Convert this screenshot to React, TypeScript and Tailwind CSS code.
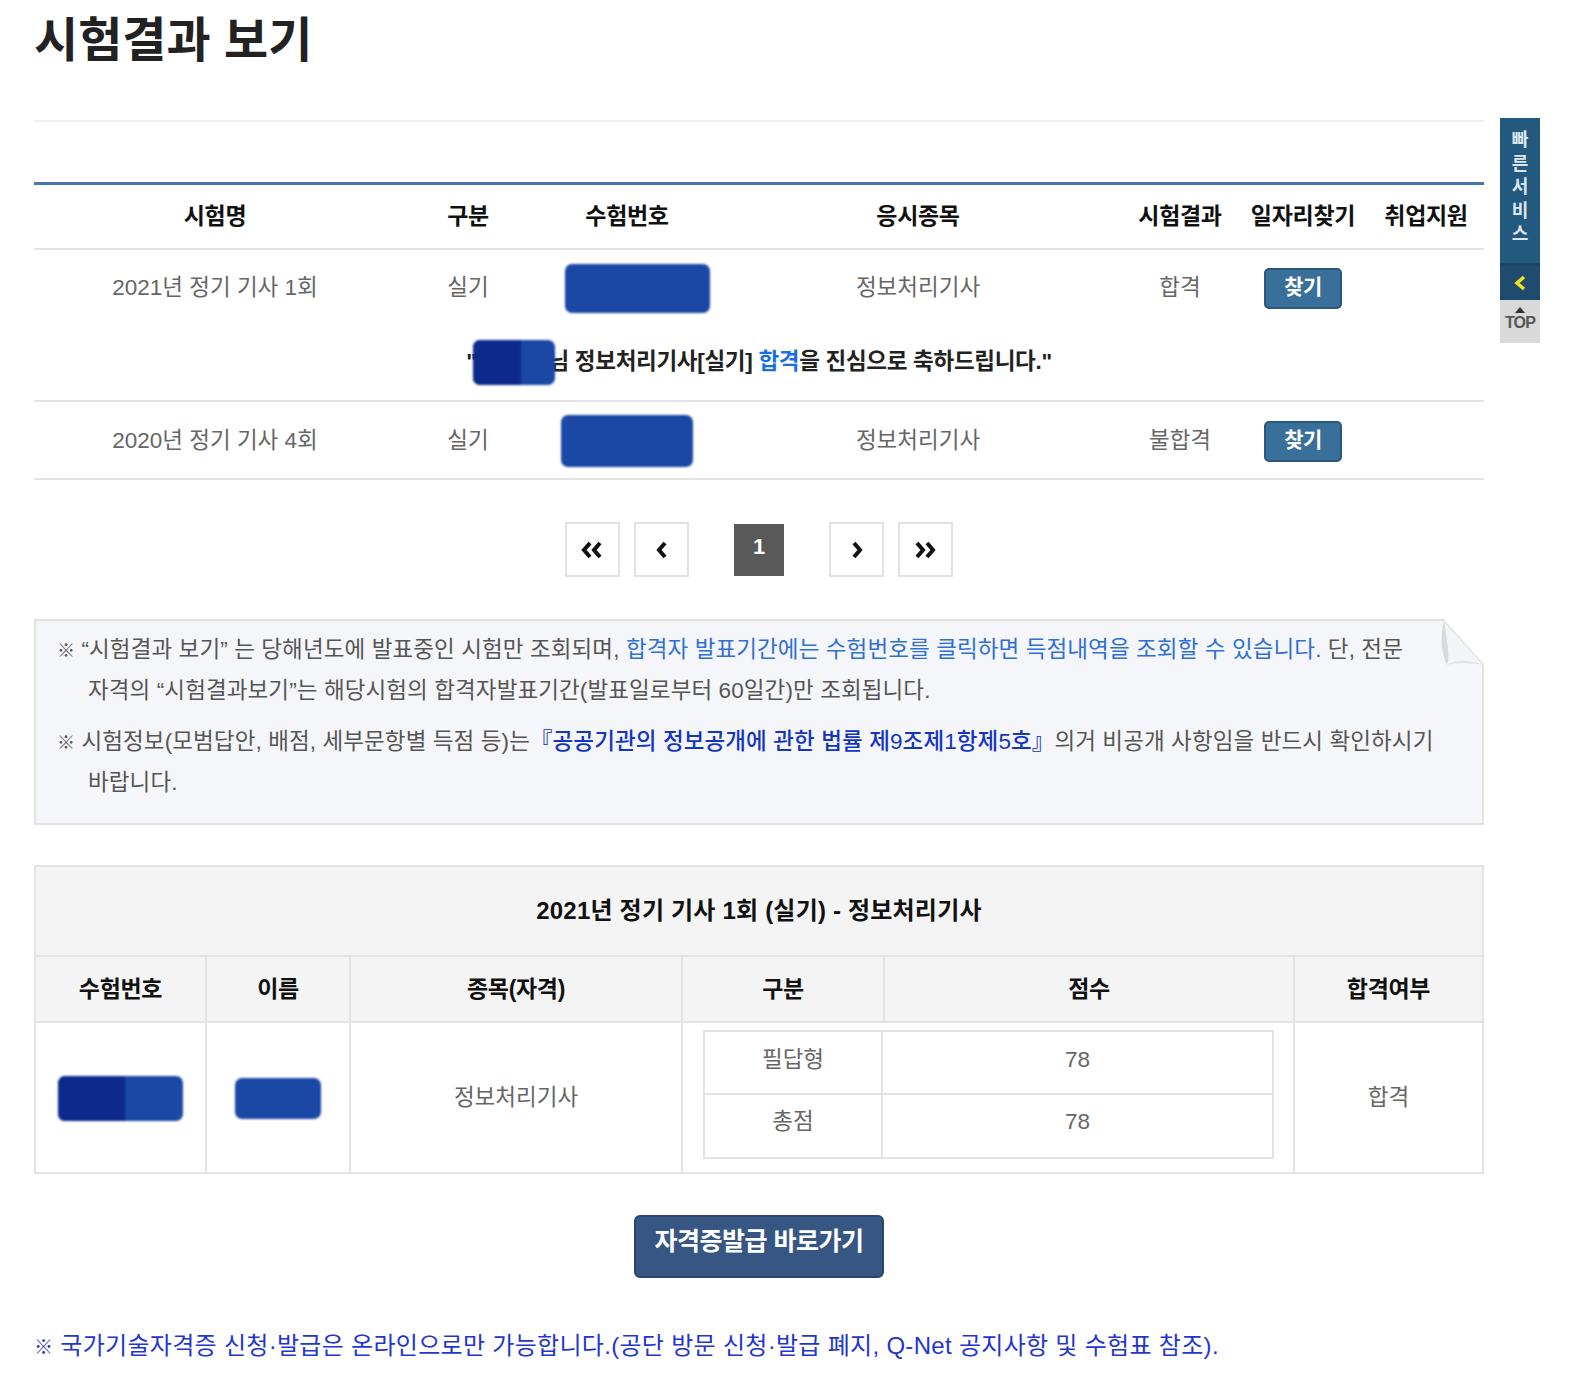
import React from "react";

const COLS = "grid-cols-[362px_144px_174px_408px_116px_130px_116px]";

function Blob({ w, h, dark, className = "" }: { w: number; h: number; dark?: number; className?: string }) {
  return (
    <span
      className={"relative inline-block rounded-[7px] bg-[#1b47a5] blur-[1.2px] overflow-hidden align-middle " + className}
      style={{ width: w, height: h }}
    >
      {dark ? <span className="absolute left-0 top-0 h-full bg-[#0b2a8c]" style={{ width: dark }} /> : null}
    </span>
  );
}

function FindButton() {
  return (
    <span className="inline-flex h-[41px] w-[78px] items-center justify-center rounded-[5px] border-2 border-[#2a587c] bg-[#39709a] pb-[3px] text-[21px] font-bold tracking-[-0.5px] text-white">
      찾기
    </span>
  );
}

function Chevrons({ dir, double }: { dir: "l" | "r"; double?: boolean }) {
  const one = dir === "l" ? "M9 2 L3 9 L9 16" : "M3 2 L9 9 L3 16";
  return (
    <svg width={double ? 24 : 12} height="18" viewBox={double ? "0 0 24 18" : "0 0 12 18"} fill="none">
      <path d={one} stroke="#111" strokeWidth="4" strokeLinejoin="miter" />
      {double && <path d={one} transform="translate(10 0)" stroke="#111" strokeWidth="4" strokeLinejoin="miter" />}
    </svg>
  );
}

function PageBox({ children }: { children: React.ReactNode }) {
  return (
    <div className="flex h-[55px] w-[55px] items-center justify-center border-2 border-[#e2e2e2] bg-white">{children}</div>
  );
}

export default function App() {
  return (
    <div className="relative min-h-[1388px] bg-white font-['Liberation_Sans','Noto_Sans_CJK_KR',sans-serif] text-[#222]">
      <div className="ml-[34px] w-[1450px]">
        {/* 제목 */}
        <h1 className="pt-[14px] text-[48px] font-bold leading-[54px] text-[#222]">시험결과 보기</h1>
        <div className="mt-[52px] h-[2px] bg-[#efefef]" />

        {/* 시험결과 목록 */}
        <div className="mt-[60px] border-t-[3px] border-[#4677b0]">
          <div className={"grid h-[65px] items-center border-b-2 border-[#e3e3e3] text-center text-[23px] font-bold tracking-[-0.3px] text-[#111] " + COLS}>
            <div>시험명</div>
            <div>구분</div>
            <div>수험번호</div>
            <div>응시종목</div>
            <div>시험결과</div>
            <div>일자리찾기</div>
            <div>취업지원</div>
          </div>
          <div className={"grid h-[74px] items-center pt-[2px] text-center text-[22.5px] text-[#666] " + COLS}>
            <div>2021년 정기 기사 1회</div>
            <div>실기</div>
            <div className="pl-[20px]">
              <Blob w={145} h={49} />
            </div>
            <div>정보처리기사</div>
            <div>합격</div>
            <div>
              <FindButton />
            </div>
            <div />
          </div>
          <div className="flex h-[78px] items-center justify-center border-b-2 border-[#e3e3e3] text-[22.5px] font-bold tracking-[-0.3px] text-[#222]">
            <span>"</span>
            <span className="relative inline-block h-[20px] w-[72px]">
              <span className="absolute left-[-4px] top-[-12px]">
                <Blob w={82} h={45} dark={48} />
              </span>
            </span>
            <span>
              님 정보처리기사[실기] <span className="text-[#1a6fe0]">합격</span>을 진심으로 축하드립니다."
            </span>
          </div>
          <div className={"grid h-[78px] items-center border-b-2 border-[#e3e3e3] pt-[2px] text-center text-[22.5px] text-[#666] " + COLS}>
            <div>2020년 정기 기사 4회</div>
            <div>실기</div>
            <div>
              <Blob w={132} h={52} />
            </div>
            <div>정보처리기사</div>
            <div>불합격</div>
            <div>
              <FindButton />
            </div>
            <div />
          </div>
        </div>

        {/* 페이지 */}
        <div className="mt-[42px] flex items-center justify-center">
          <PageBox>
            <Chevrons dir="l" double />
          </PageBox>
          <div className="ml-[14px]">
            <PageBox>
              <Chevrons dir="l" />
            </PageBox>
          </div>
          <div className="ml-[45px] flex h-[52px] w-[50px] items-start justify-center bg-[#595959] pt-[6px] text-[22px] font-bold text-white">
            1
          </div>
          <div className="ml-[45px]">
            <PageBox>
              <Chevrons dir="r" />
            </PageBox>
          </div>
          <div className="ml-[14px]">
            <PageBox>
              <Chevrons dir="r" double />
            </PageBox>
          </div>
        </div>

        {/* 안내 */}
        <div className="relative mt-[42px] border-2 border-[#e2e2e2] bg-[#f5f6fa] pb-[20px] pl-[21px] pr-[20px] pt-[9px] text-[22.5px] leading-[40px] tracking-[0.1px] text-[#555]">
          <p className="-indent-[31px] pl-[31px] whitespace-nowrap">
            <span className="text-[18px] font-bold">※</span> “시험결과 보기” 는 당해년도에 발표중인 시험만 조회되며,{" "}
            <span className="text-[#2f6fd6]">합격자 발표기간에는 수험번호를 클릭하면 득점내역을 조회할 수 있습니다.</span> 단, 전문
            <br />
            자격의 “시험결과보기”는 해당시험의 합격자발표기간(발표일로부터 60일간)만 조회됩니다.
          </p>
          <p className="mt-[11px] -indent-[31px] pl-[31px] whitespace-nowrap">
            <span className="text-[18px] font-bold">※</span> 시험정보(모범답안, 배점, 세부문항별 득점 등)는
            <span className="font-medium text-[#1434c2]">『공공기관의 정보공개에 관한 법률 제9조제1항제5호』</span>의거 비공개 사항임을 반드시 확인하시기
            <br />
            바랍니다.
          </p>
          <svg className="absolute right-[-2px] top-[-2px]" width="46" height="48" viewBox="0 0 46 48">
            <path d="M6 0 L46 0 L46 46 Z" fill="#fff" />
            <path d="M6 2 C2 18 3 34 9 46 C20 44 34 44 46 46 Z" fill="#f3f4f8" />
            <path d="M6 2 C2 18 3 34 9 46 C12 40 10 30 6 2 Z" fill="#d9d9d9" />
            <path d="M9 46 C20 43 34 44 46 46 C30 41 18 40 9 46 Z" fill="#e2e2e2" />
            <path d="M6 2 L46 46" stroke="#e4e4e4" strokeWidth="1.5" />
          </svg>
        </div>

        {/* 득점 상세 */}
        <div className="mt-[40px] border-2 border-[#e3e3e3]">
          <div className="flex h-[88px] items-center justify-center bg-[#f4f4f4] text-[24px] font-bold tracking-[0.2px] text-[#111]">
            2021년 정기 기사 1회 (실기) - 정보처리기사
          </div>
          <div className="grid h-[66px] grid-cols-[171px_144px_332px_202px_410px_187px] items-center border-t-2 border-[#e3e3e3] bg-[#f4f4f4] text-center text-[23px] font-bold tracking-[-0.3px] text-[#111]">
            <div className="flex h-full items-center justify-center border-r-2 border-[#e3e3e3]">수험번호</div>
            <div className="flex h-full items-center justify-center border-r-2 border-[#e3e3e3]">이름</div>
            <div className="flex h-full items-center justify-center border-r-2 border-[#e3e3e3]">종목(자격)</div>
            <div className="flex h-full items-center justify-center border-r-2 border-[#e3e3e3]">구분</div>
            <div className="flex h-full items-center justify-center border-r-2 border-[#e3e3e3]">점수</div>
            <div className="flex h-full items-center justify-center">합격여부</div>
          </div>
          <div className="grid h-[151px] grid-cols-[171px_144px_332px_612px_187px] border-t-2 border-[#e3e3e3] bg-white text-center text-[22.5px] text-[#666]">
            <div className="flex items-center justify-center border-r-2 border-[#e3e3e3] pt-[2px]">
              <Blob w={125} h={45} dark={67} />
            </div>
            <div className="flex items-center justify-center border-r-2 border-[#e3e3e3] pt-[2px]">
              <Blob w={86} h={41} />
            </div>
            <div className="flex items-center justify-center border-r-2 border-[#e3e3e3]">정보처리기사</div>
            <div className="border-r-2 border-[#e3e3e3] pb-[13px] pl-[20px] pr-[19px] pt-[7px]">
              <div className="border-2 border-[#e3e3e3]">
                <div className="grid h-[63px] grid-cols-[178px_1fr] border-b-2 border-[#e3e3e3]">
                  <div className="flex items-start justify-center border-r-2 border-[#e3e3e3] pt-[11px]">필답형</div>
                  <div className="flex items-start justify-center pt-[11px]">78</div>
                </div>
                <div className="grid h-[62px] grid-cols-[178px_1fr]">
                  <div className="flex items-start justify-center border-r-2 border-[#e3e3e3] pt-[10px]">총점</div>
                  <div className="flex items-start justify-center pt-[10px]">78</div>
                </div>
              </div>
            </div>
            <div className="flex items-center justify-center">합격</div>
          </div>
        </div>

        {/* 자격증발급 */}
        <div className="mt-[41px] flex justify-center">
          <button className="h-[63px] w-[250px] rounded-[6px] border-2 border-[#2a4470] bg-[#375683] pb-[9px] text-[25px] font-bold tracking-[-0.5px] text-white">
            자격증발급 바로가기
          </button>
        </div>

        <p className="mt-[52px] text-[24px] leading-[32px] tracking-[0.3px] text-[#1f36cf]">
          <span className="text-[19px] font-bold">※</span> 국가기술자격증 신청·발급은 온라인으로만 가능합니다.(공단 방문 신청·발급 폐지, Q-Net 공지사항 및 수험표 참조).
        </p>
      </div>

      {/* 빠른서비스 */}
      <div className="absolute left-[1500px] top-[118px] w-[40px]">
        <div className="flex h-[145px] flex-col items-center bg-[#23587f] pt-[11px] text-[18px] font-bold leading-[23.5px] text-[#dde7ef]">
          <span>빠</span>
          <span>른</span>
          <span>서</span>
          <span>비</span>
          <span>스</span>
        </div>
        <div className="h-[2px] bg-[#1a4566]" />
        <div className="flex h-[35px] items-center justify-center bg-[#1f4b6f]">
          <svg width="14" height="16" viewBox="0 0 14 16">
            <path d="M11 2 L4 8 L11 14" stroke="#f2e21c" strokeWidth="3.5" fill="none" />
          </svg>
        </div>
        <div className="flex h-[43px] flex-col items-center bg-[#d9d9d9] pt-[7px]">
          <svg width="10" height="6" viewBox="0 0 10 6">
            <path d="M5 0 L10 6 L0 6 Z" fill="#333" />
          </svg>
          <span className="text-[16px] font-bold leading-[19px] tracking-[-0.8px] text-[#555]">TOP</span>
        </div>
      </div>
    </div>
  );
}
